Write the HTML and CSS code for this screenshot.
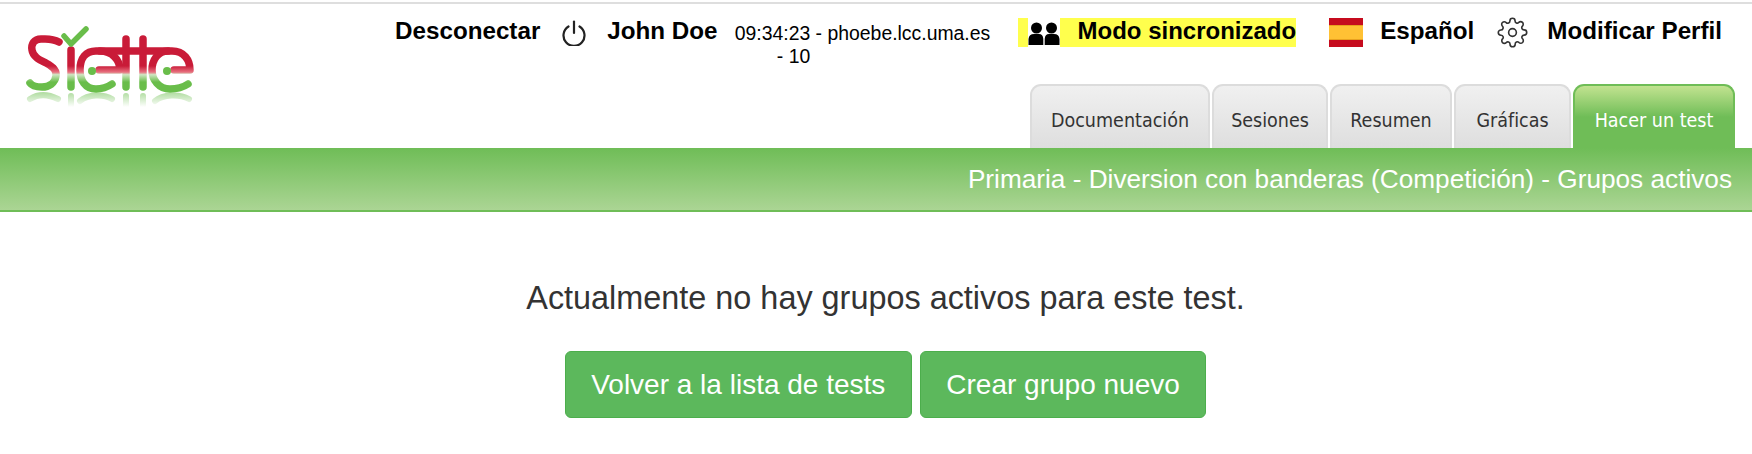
FILE: index.html
```html
<!DOCTYPE html>
<html lang="es">
<head>
<meta charset="utf-8">
<title>Siette</title>
<link rel="stylesheet" href="styles.css">
</head>
<body>
<div class="topline"></div>
<header class="header">
  <svg class="logo" viewBox="0 4 200 144" width="200" height="144" aria-label="Siette">
    <defs>
      <linearGradient id="lg" gradientUnits="userSpaceOnUse" x1="0" y1="30" x2="0" y2="92">
        <stop offset="0" stop-color="#c91b38"/>
        <stop offset="0.58" stop-color="#c91b38"/>
        <stop offset="0.68" stop-color="#e8707f"/>
        <stop offset="0.72" stop-color="#cfe6c2"/>
        <stop offset="0.84" stop-color="#69bd4a"/>
        <stop offset="1" stop-color="#69bd4a"/>
      </linearGradient>
      <linearGradient id="fade" gradientUnits="userSpaceOnUse" x1="0" y1="93" x2="0" y2="107">
        <stop offset="0" stop-color="#69bd4a" stop-opacity="0.5"/>
        <stop offset="1" stop-color="#69bd4a" stop-opacity="0"/>
      </linearGradient>
    </defs>
    <g class="logo-ink" stroke="url(#lg)">
      <path d="M59,42 C52,38 46,39 41,39 C34,39 31,44 32,50 C33,57 40,60 46,63 C52,66 57,70 56,76 C55,83 49,87 42,87 C36,87 32,86 30,83"/>
      <path d="M71,50 V87"/>
      <path d="M112,84 C106,88 100,89 96,89 C85,89 80,80 80,70 C80,58 86,51 96,51 H172 C184,51 190,60 190,70 H174"/>
      <path d="M99,70 H120 C120,60 112,51 100,51"/>
      <path d="M188,84 C182,88 176,89 170,89 C159,89 152,80 152,70 C152,60 158,51 168,51"/>
      <path d="M126,39 V87"/>
      <path d="M143,39 V87"/>
    </g>
    <circle class="logo-dot" cx="92" cy="71" r="4"/>
    <circle class="logo-dot" cx="167" cy="71" r="4"/>
    <path class="logo-check" d="M64,36 L71,44 L86,29"/>
    <g class="logo-reflect" stroke="url(#fade)">
      <path d="M30,99 C38,94 48,94 58,99"/>
      <path d="M71,96 V106"/>
      <path d="M80,101 C88,94 104,94 112,99"/>
      <path d="M126,96 V106"/>
      <path d="M143,96 V106"/>
      <path d="M155,101 C163,94 180,94 189,99"/>
    </g>
  </svg>
  <div class="header-right">
    <div class="userbar">
      <a class="ub-link ub-logout">Desconectar</a>
      <svg class="ub-power" viewBox="0 0 24 26" width="24" height="26">
        <path d="M6.5 6.5 A10.5 10.5 0 1 0 17.5 6.5"/>
        <path d="M12 1.5 V13"/>
      </svg>
      <span class="ub-link ub-name">John Doe</span>
      <div class="ub-server">09:34:23 - phoebe.lcc.uma.es<span class="ub-server-line">- 10</span></div>
      <div class="ub-sync">
        <svg class="ub-people" viewBox="0 0 32 29" width="32" height="29">
          <circle cx="8.5" cy="10" r="5.5"/>
          <circle cx="23.5" cy="10" r="5.5"/>
          <path d="M0.5 27 V21 Q1 16 6 16 H11 Q15 16 15.3 21 V27 Z"/>
          <path d="M16.7 27 V21 Q17 16 21 16 H26 Q31 16 31.5 21 V27 Z"/>
        </svg>
        <span class="ub-link ub-sync-label">Modo sincronizado</span>
      </div>
      <svg class="ub-flag" viewBox="0 0 34 29" width="34" height="29">
        <rect width="34" height="29" fill="#c60b1e"/>
        <rect y="7" width="34" height="15" fill="#e8a11f"/>
        <rect y="8" width="34" height="13" fill="#ffc134"/>
      </svg>
      <span class="ub-link ub-lang">Español</span>
      <svg class="ub-gear" viewBox="0 0 24 24" width="31" height="31">
        <circle cx="12" cy="12" r="3"/>
        <path d="M19.4 15a1.65 1.65 0 0 0 .33 1.82l.06.06a2 2 0 0 1 0 2.83 2 2 0 0 1-2.83 0l-.06-.06a1.65 1.65 0 0 0-1.82-.33 1.65 1.65 0 0 0-1 1.51V21a2 2 0 0 1-2 2 2 2 0 0 1-2-2v-.09A1.65 1.65 0 0 0 9 19.4a1.65 1.65 0 0 0-1.82.33l-.06.06a2 2 0 0 1-2.83 0 2 2 0 0 1 0-2.83l.06-.06a1.65 1.65 0 0 0 .33-1.82 1.65 1.65 0 0 0-1.51-1H3a2 2 0 0 1-2-2 2 2 0 0 1 2-2h.09A1.65 1.65 0 0 0 4.6 9a1.65 1.65 0 0 0-.33-1.82l-.06-.06a2 2 0 0 1 0-2.83 2 2 0 0 1 2.83 0l.06.06a1.65 1.65 0 0 0 1.82.33H9a1.65 1.65 0 0 0 1-1.51V3a2 2 0 0 1 2-2 2 2 0 0 1 2 2v.09a1.65 1.65 0 0 0 1 1.51 1.65 1.65 0 0 0 1.82-.33l.06-.06a2 2 0 0 1 2.83 0 2 2 0 0 1 0 2.83l-.06.06a1.65 1.65 0 0 0-.33 1.82V9a1.65 1.65 0 0 0 1.51 1H21a2 2 0 0 1 2 2 2 2 0 0 1-2 2h-.09a1.65 1.65 0 0 0-1.51 1z"/>
      </svg>
      <span class="ub-link">Modificar Perfil</span>
    </div>
    <nav class="tabs">
      <a class="tab tab-doc">Documentación</a>
      <a class="tab tab-ses">Sesiones</a>
      <a class="tab tab-res">Resumen</a>
      <a class="tab tab-gra">Gráficas</a>
      <a class="tab tab-test tab-active">Hacer un test</a>
    </nav>
  </div>
</header>
<div class="titlebar">Primaria - Diversion con banderas (Competición) - Grupos activos</div>
<main class="content">
  <p class="message">Actualmente no hay grupos activos para este test.</p>
  <div class="actions">
    <a class="btn">Volver a la lista de tests</a>
    <a class="btn">Crear grupo nuevo</a>
  </div>
</main>
</body>
</html>
```
FILE: styles.css
```css
* { box-sizing: border-box; }
html, body { margin: 0; padding: 0; background: #fff; }
body {
  height: 454px;
  overflow: hidden;
  font-family: "Liberation Sans", Arial, sans-serif;
  color: #333;
}
.topline {
  height: 2px;
  margin-top: 2px;
  background: #dedede;
}
.header {
  display: flex;
  height: 144px;
}
.logo { flex: none; display: block; }
.logo-ink, .logo-reflect, .logo-check {
  fill: none;
  stroke-linecap: round;
  stroke-linejoin: round;
}
.logo-ink { stroke-width: 7.5; }
.logo-reflect { stroke-width: 6; }
.logo-check { stroke: #69bd4a; stroke-width: 5.5; }
.logo-dot { fill: #69bd4a; }

.header-right {
  flex: 1;
  display: flex;
  flex-direction: column;
  justify-content: space-between;
}
.userbar {
  display: flex;
  justify-content: flex-end;
  align-items: flex-start;
  padding: 14px 30px 0 0;
}
.ub-link {
  font-size: 24.2px;
  font-weight: bold;
  line-height: 26px;
  color: #000;
  white-space: nowrap;
}
.ub-sync-label { font-size: 24px; }
.ub-logout { margin-right: 22px; }
.ub-power {
  flex: none;
  margin: 2px 21px 0 0;
  fill: none;
  stroke: #222;
  stroke-width: 2.2;
  stroke-linecap: round;
}
.ub-name { margin-right: 17px; }
.ub-server {
  width: 256px;
  margin: 4px 27px 0 0;
  font-size: 19.4px;
  line-height: 23px;
  color: #000;
  text-align: center;
  white-space: nowrap;
}
.ub-server-line {
  display: block;
  padding-right: 138px;
}
.ub-sync {
  display: flex;
  align-items: flex-start;
  gap: 18px;
  height: 29px;
  padding-left: 10px;
  background: #ffff4d;
}
.ub-people {
  flex: none;
  background: #fff;
  fill: #000;
}
.ub-flag { flex: none; margin: 0 17px 0 33px; }
.ub-lang { margin-right: 23px; }
.ub-gear {
  flex: none;
  margin: -1px 19px 0 0;
  fill: none;
  stroke: #333;
  stroke-width: 1.25;
}
.tabs {
  display: flex;
  justify-content: flex-end;
  gap: 2px;
  padding-right: 17px;
}
.tab {
  height: 64px;
  padding-top: 24px;
  border: 2px solid #dcdcdc;
  border-bottom: 0;
  border-radius: 11px 11px 0 0;
  background: linear-gradient(#f0f0f0, #dedede);
  font-family: "DejaVu Sans Condensed", "DejaVu Sans", Verdana, sans-serif;
  font-stretch: condensed;
  font-size: 19.5px;
  line-height: 22px;
  color: #333;
  text-align: center;
  white-space: nowrap;
}
.tab-doc { width: 180px; }
.tab-ses { width: 116px; }
.tab-res { width: 122px; }
.tab-gra { width: 117px; }
.tab-test { width: 162px; }
.tab-active {
  border-color: #6fbd57;
  background: linear-gradient(#c2e390, #6fbd57 50%);
  color: #fff;
}
.titlebar {
  height: 64px;
  padding: 13px 20px 0 0;
  border-bottom: 2px solid #6fbd57;
  background: linear-gradient(#6fbd57, #abd594);
  font-size: 26.2px;
  line-height: 36px;
  color: #fff;
  text-align: right;
}
.content {
  padding: 67px 0 0 19px;
  text-align: center;
}
.message {
  margin: 0;
  font-size: 32.4px;
  line-height: 38px;
}
.actions {
  display: flex;
  justify-content: center;
  gap: 8px;
  margin-top: 34px;
}
.btn {
  display: block;
  height: 67px;
  padding: 0 25.5px;
  border: 1px solid #4cae4c;
  border-radius: 6px;
  background: #5cb85c;
  font-size: 28px;
  line-height: 65px;
  color: #fff;
  white-space: nowrap;
}
```
